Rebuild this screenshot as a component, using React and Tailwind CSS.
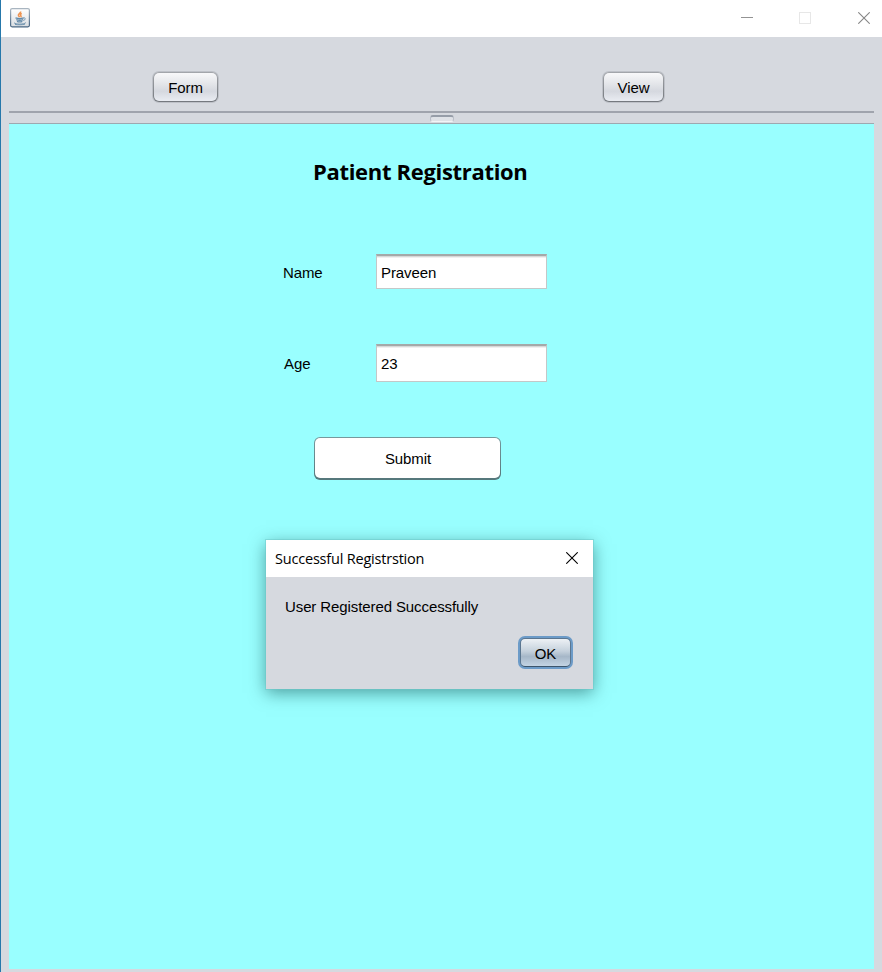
import React from "react";

function JavaIcon() {
  return (
    <svg width="20" height="20" viewBox="0 0 20 20" fill="none">
      <defs>
        <linearGradient id="frame" x1="0" y1="0" x2="0" y2="1">
          <stop offset="0" stopColor="#a9b5c0" />
          <stop offset="1" stopColor="#476582" />
        </linearGradient>
        <linearGradient id="face" x1="0" y1="0" x2="0" y2="1">
          <stop offset="0" stopColor="#ffffff" />
          <stop offset="1" stopColor="#d9dde1" />
        </linearGradient>
      </defs>
      <rect x="0.6" y="0.6" width="18.8" height="18.2" rx="1.5" fill="url(#face)" stroke="url(#frame)" strokeWidth="1.2" />
      <path d="M10.6 3.500c.8 1.500-2.800 2.300-2.200 4 .2.700.9 1 1.100 1.700M11.800 5.500c-2 .8-1.600 1.500-.9 2.300.4.500.2 1-.2 1.400" stroke="#ee9350" strokeWidth="1.500" />
      <path d="M5.500 9.900c2 .7 6.400.7 8.200 0M6.300 11.700c1.900.6 5 .6 6.700 0M7 13.300c1.500.6 4 .6 5.300 0" stroke="#6289a8" strokeWidth="1.400" />
      <path d="M13.500 9.900c2.400-.4 2.400 2-.3 2.500M4 14.700c1.200 1.900 10.500 1.900 11.800-.1M5 16.400c3 .6 7.500.5 10-.3" stroke="#7194af" strokeWidth="1" />
    </svg>
  );
}

function CloseIcon({ color }) {
  return (
    <svg width="12" height="12" viewBox="0 0 12 12" fill="none">
      <path d="M0.300 0.300L11.700 11.700M11.700 0.300L0.300 11.700" stroke={color} strokeWidth="1.100" />
    </svg>
  );
}

function ToolButton({ children, className }) {
  return (
    <button className={`h-[30px] rounded-[6px] bg-linear-to-b from-[#a3a6ab] to-[#74787e] px-px pb-px pt-px shadow-[0_0_0_1px_#bec1c8] ${className}`}>
      <span className="flex h-full items-center justify-center rounded-[5px] bg-[linear-gradient(#f8f8fa_0%,#e3e5e9_40%,#d5d8df_65%,#e9ecf2_100%)] pt-px">
        {children}
      </span>
    </button>
  );
}

function Field({ value, className }) {
  return (
    <div className={`flex w-[171px] items-center border border-t-2 border-[#c4c8c8] border-t-[#a5a9a9] bg-white pl-1 shadow-[inset_0_1px_0_#d8d8d8,inset_0_2px_0_#f0f0f0] ${className}`}>
      {value}
    </div>
  );
}

export default function App() {
  return (
    <div className="relative flex h-[972px] w-[882px] flex-col overflow-hidden border-l border-[#2678ab] bg-[#d6d9df] font-['Liberation_Sans',Arial,sans-serif] text-[15px] leading-[18px] tracking-[-0.100px] text-black">
      <header className="flex h-[37px] shrink-0 bg-white pl-[9px] pt-2">
        <JavaIcon />
        <div className="ml-auto flex pr-3 pt-1">
          <svg className="mr-[46px]" width="12" height="12"><path d="M0 5.500H12" stroke="#939393" /></svg>
          <svg className="mr-[47px]" width="12" height="12"><rect x="0.500" y="0.500" width="11" height="11" fill="none" stroke="#e7e7e7" /></svg>
          <CloseIcon color="#868686" />
        </div>
      </header>

      <nav className="mx-2 flex h-[76px] shrink-0 border-b-2 border-[#a0a4ad] pl-[144px] pt-[35px]">
        <ToolButton className="w-[65px]">Form</ToolButton>
        <ToolButton className="ml-[385px] w-[61px]">View</ToolButton>
      </nav>
      <div className="mx-2 flex h-[11px] shrink-0 justify-center border-b border-[#9ea8b0] pt-0.5">
        <div className="h-[7px] w-[24px] rounded-[3px] border border-t-2 border-[#b9bec7] border-b-[#f3f4f6] border-t-[#969da8] bg-[#dfe2e7]" />
      </div>

      <main className="mx-2 flex h-[845px] shrink-0 flex-col bg-[#99ffff]">
        <h1 className="ml-[304px] mt-[32px] h-[30px] whitespace-nowrap font-['Open_Sans','Noto_Sans',sans-serif] text-[22px] font-bold leading-[30px] tracking-[-0.320px]">
          Patient Registration
        </h1>
        <div className="ml-[274px] mt-[68px] flex items-center">
          <label className="w-[93px] pt-[3px]">Name</label>
          <Field value="Praveen" className="h-[35px] pt-[2px]" />
        </div>
        <div className="ml-[275px] mt-[55px] flex items-center">
          <label className="w-[92px] pt-[2px]">Age</label>
          <Field value="23" className="h-[38px]" />
        </div>
        <button className="ml-[305px] mt-[55px] h-[43px] w-[187px] rounded-[6px] bg-linear-to-b from-[#77999d] to-[#55777b] px-px pb-[2px] pt-px">
          <span className="flex h-full items-center justify-center rounded-[5px] bg-white pl-px pt-[2px]">Submit</span>
        </button>
      </main>

      <section className="absolute left-[265px] top-[540px] flex h-[149px] w-[327px] flex-col bg-[#d6d9df] shadow-[0_0_0_1px_rgba(110,200,200,0.5),0_4px_16px_rgba(0,60,60,0.5)]">
        <div className="flex h-[37px] items-center justify-between bg-white pl-[9px] pr-[15px]">
          <span className="whitespace-nowrap font-['Open_Sans','Noto_Sans',sans-serif] text-[14.500px] tracking-[-0.200px]">Successful Registrstion</span>
          <span className="pb-px"><CloseIcon color="#000000" /></span>
        </div>
        <p className="ml-[19px] mt-[21px] whitespace-nowrap">User Registered Successfully</p>
        <button className="ml-auto mr-[20px] mt-[20px] h-[33px] w-[55px] rounded-[7px] bg-[#6c9bc8] p-[2px]">
          <span className="flex h-full items-center justify-center rounded-[5px] border border-[#5b7690] border-b-[#3c556c] bg-[linear-gradient(#edf1f5_0%,#c5d1dc_45%,#a6b7c8_65%,#c3d4e4_100%)] pt-[2px]">OK</span>
        </button>
      </section>
    </div>
  );
}
